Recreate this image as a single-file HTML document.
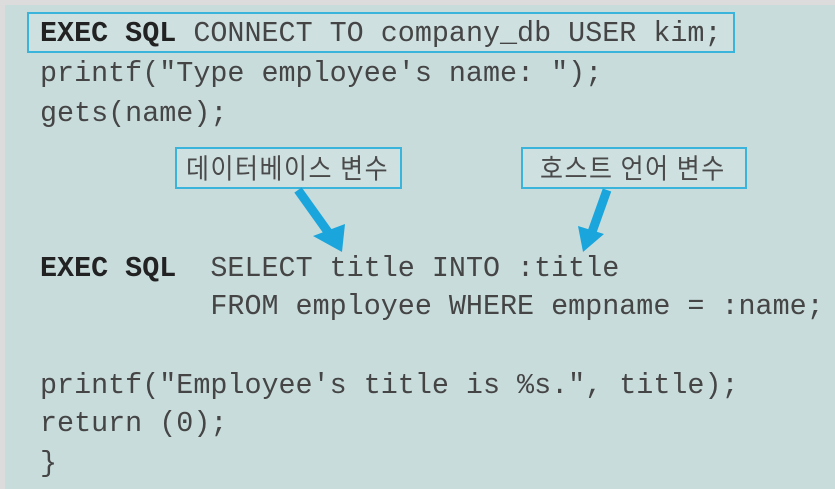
<!DOCTYPE html>
<html><head><meta charset="utf-8"><style>
html,body{margin:0;padding:0}
body{width:835px;height:489px;background:#dcdcdc;position:relative;overflow:hidden;font-family:"Liberation Mono",monospace;color:#454545}
#p{position:absolute;left:5px;top:5px;right:0;bottom:0;background:#c9dcdc}
.l{position:absolute;font-size:28.4px;white-space:pre;line-height:1;letter-spacing:0}
b{color:#222}
.box{position:absolute;border:2px solid #3ab4da;background:#cfe0e0;box-sizing:border-box}
.k{position:absolute;font-family:"Noto Sans CJK KR","NanumGothic",sans-serif;font-size:25px;color:#4a4a4a;line-height:1;white-space:nowrap;letter-spacing:1.5px;transform:scaleY(1.1);transform-origin:left top}
</style></head><body>
<div id="p"></div>
<div class="box" style="left:27px;top:12px;width:708px;height:41px"></div>
<div class="l" style="left:40px;top:20px"><b>EXEC SQL</b> CONNECT TO company_db USER kim;</div>
<div class="l" style="left:40px;top:60px">printf("Type employee's name: ");</div>
<div class="l" style="left:40px;top:100px">gets(name);</div>
<div class="box" style="left:175px;top:147px;width:227px;height:42px"></div>
<div class="k" style="left:186px;top:154px">데이터베이스 변수</div>
<div class="box" style="left:521px;top:147px;width:226px;height:42px"></div>
<div class="k" style="left:540px;top:154px">호스트 언어 변수</div>
<svg style="position:absolute;left:0;top:0" width="835" height="489">
<line x1="298" y1="190" x2="328" y2="232" stroke="#1aa6dc" stroke-width="9"/>
<polygon points="313,236 345,224 342,252" fill="#1aa6dc"/>
<line x1="607" y1="190" x2="592" y2="232" stroke="#1aa6dc" stroke-width="9"/>
<polygon points="578,226 604,234 583,252" fill="#1aa6dc"/>
</svg>
<div class="l" style="left:40px;top:255px"><b>EXEC SQL</b>  SELECT title INTO :title</div>
<div class="l" style="left:40px;top:293px">          FROM employee WHERE empname = :name;</div>
<div class="l" style="left:40px;top:372px">printf("Employee's title is %s.", title);</div>
<div class="l" style="left:40px;top:410px">return (0);</div>
<div class="l" style="left:40px;top:450px">}</div>
</body></html>
